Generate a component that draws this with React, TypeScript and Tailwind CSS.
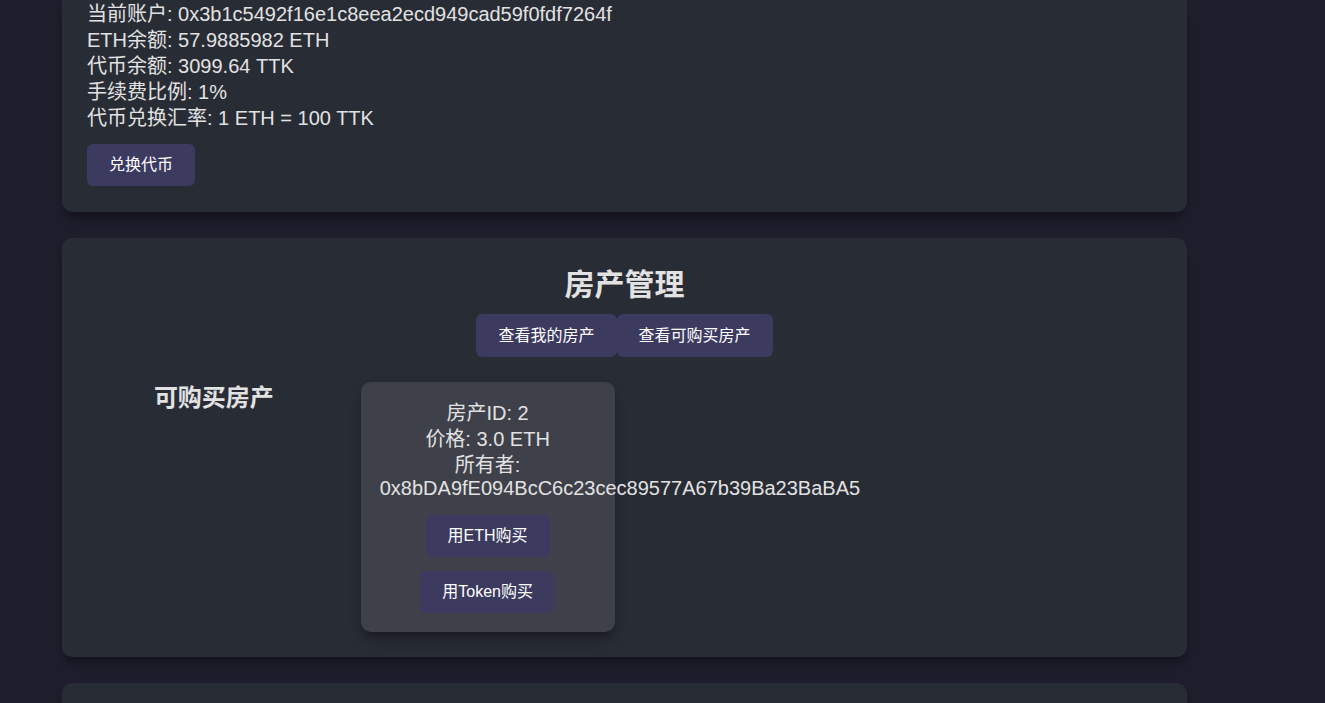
import React from "react";

const font = { fontFamily: '"Liberation Sans", Arial, "Noto Sans CJK SC", sans-serif' };

function Btn({ children, h = "h-[42px]" }: { children: React.ReactNode; h?: string }) {
  return (
    <button className={`${h} flex items-center justify-center bg-[#3c3a5f] text-white text-[16px] leading-[22px] px-[22px] rounded-[6px]`}>
      {children}
    </button>
  );
}

export default function App() {
  return (
    <div className="min-h-screen bg-[#1e1e2d] text-[#e2e2e2]" style={font}>
      <div className="ml-[62px] w-[1125px] flex flex-col gap-[26px] pb-[40px]">
        {/* account card (top scrolled out) */}
        <div className="bg-[#282c35] rounded-b-[10px] shadow-lg shadow-black/30 px-[25px] pb-[26px] text-[20px] leading-[23px]">
          <p className="my-[3px]">当前账户: 0x3b1c5492f16e1c8eea2ecd949cad59f0fdf7264f</p>
          <p className="my-[3px]">ETH余额: 57.9885982 ETH</p>
          <p className="my-[3px]">代币余额: 3099.64 TTK</p>
          <p className="my-[3px]">手续费比例: 1%</p>
          <p className="my-[3px]">代币兑换汇率: 1 ETH = 100 TTK</p>
          <div className="mt-[14px] flex">
            <Btn>兑换代币</Btn>
          </div>
        </div>

        {/* property management */}
        <div className="bg-[#282c35] rounded-[10px] shadow-lg shadow-black/30 px-[25px] pt-[25px] pb-[25px]">
          <h2 className="text-center text-[30px] leading-[40px] font-bold mt-[2px] mb-[9px]">房产管理</h2>
          <div className="flex justify-center">
            <Btn h="h-[43px]">查看我的房产</Btn>
            <Btn h="h-[43px]">查看可购买房产</Btn>
          </div>
          <div className="grid grid-cols-4 gap-[20px] mt-[25px]">
            <h3 className="text-center text-[24px] leading-[30px] font-bold mt-[1px]">可购买房产</h3>
            <div className="bg-[#3e4149] rounded-[10px] shadow-lg shadow-black/30 px-[19px] pt-[17px] pb-[19px] text-center text-[20px] leading-[23px]">
              <p className="my-[3px]">房产ID: 2</p>
              <p className="my-[3px]">价格: 3.0 ETH</p>
              <p className="my-[3px]">所有者: 0x8bDA9fE094BcC6c23cec89577A67b39Ba23BaBA5</p>
              <div className="flex flex-col items-center gap-[14px] mt-[15px]">
                <Btn>用ETH购买</Btn>
                <Btn>用Token购买</Btn>
              </div>
            </div>
          </div>
        </div>

        {/* next card */}
        <div className="bg-[#282c35] rounded-[10px] shadow-lg shadow-black/30 h-[120px]"></div>
      </div>
    </div>
  );
}
